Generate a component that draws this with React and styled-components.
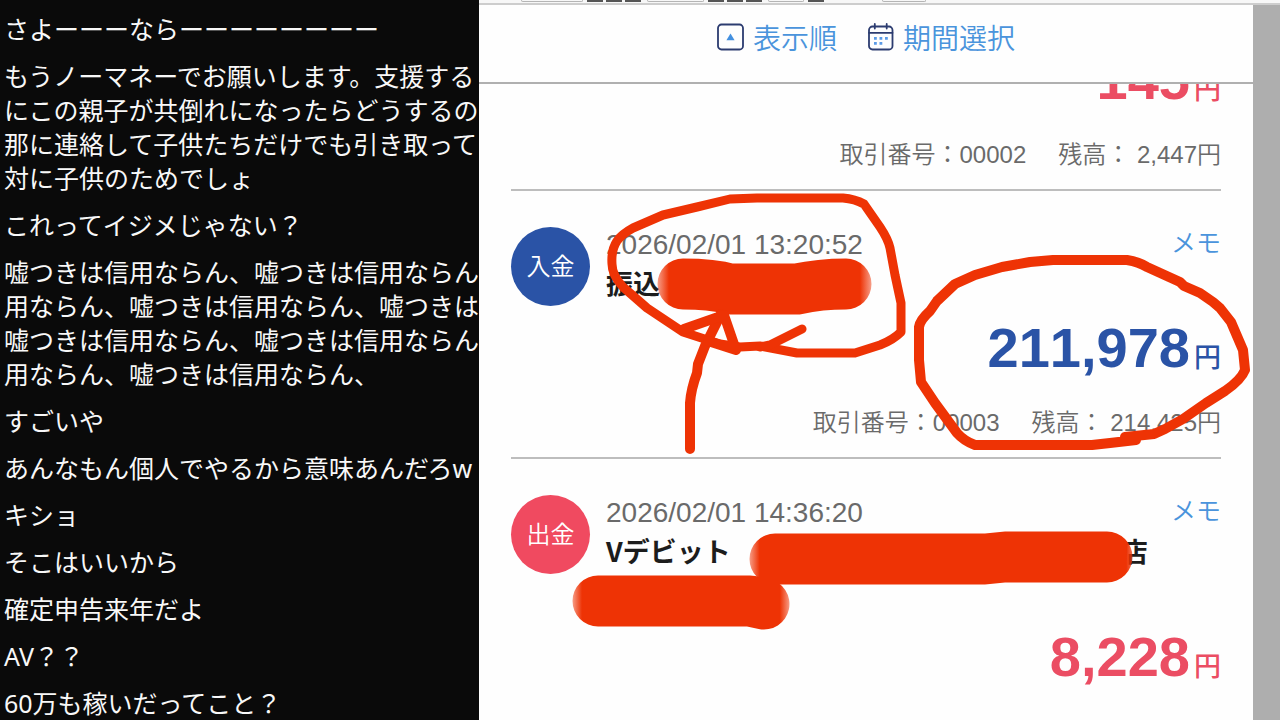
import React from "react";
import styled, { createGlobalStyle } from "styled-components";

const messages = [
  ["さよーーーならーーーーーーーー"],
  [
    "もうノーマネーでお願いします。支援する",
    "にこの親子が共倒れになったらどうするの",
    "那に連絡して子供たちだけでも引き取って",
    "対に子供のためでしょ",
  ],
  ["これってイジメじゃない？"],
  [
    "嘘つきは信用ならん、嘘つきは信用ならん",
    "用ならん、嘘つきは信用ならん、嘘つきは",
    "嘘つきは信用ならん、嘘つきは信用ならん",
    "用ならん、嘘つきは信用ならん、",
  ],
  ["すごいや"],
  ["あんなもん個人でやるから意味あんだろw"],
  ["キショ"],
  ["そこはいいから"],
  ["確定申告来年だよ"],
  ["AV？？"],
  ["60万も稼いだってこと？"],
];

const Amount = ({ value, out }) => (
  <AmountRow $out={out}>
    {value}
    <Yen>円</Yen>
  </AmountRow>
);

const Meta = ({ number, balance }) => (
  <MetaRow>
    <span>取引番号：{number}</span>
    <span>残高： {balance}円</span>
  </MetaRow>
);

const App = () => {
  return (
    <Container>
      <GlobalStyle />
      <Chat>
        {messages.map((lines) => (
          <Message key={lines[0]}>
            {lines.map((line, i) => (
              <Line key={i}>{line}</Line>
            ))}
          </Message>
        ))}
      </Chat>

      <Screen>
        <Strip>
          <Tab $w={62} />
          <Blocks>
            <Block />
            <Block />
            <Block />
          </Blocks>
          <Tab $w={57} />
          <Blocks>
            <Block />
            <Block />
            <Block />
          </Blocks>
          <Tab $w={36} />
          <Block />
          <Tab $w={44} $push />
        </Strip>

        <Body>
          <Page>
            <Toolbar>
              <ToolButton>
                <svg width="27" height="28" viewBox="0 0 27 28" fill="none">
                  <rect x="1" y="1.5" width="25" height="25" rx="3.5" stroke="#2c3c70" strokeWidth="1.8" />
                  <path d="M13.5 10.5 L17.6 17.2 H9.4 Z" fill="#4390e0" />
                </svg>
                表示順
              </ToolButton>
              <ToolButton>
                <svg width="27" height="28" viewBox="0 0 27 28" fill="none">
                  <rect x="2" y="3.5" width="23.5" height="23" rx="3.5" stroke="#2c3c70" strokeWidth="1.8" />
                  <path d="M2 9.8 H25.5 M7.8 0.9 V5.5 M19.7 0.9 V5.5" stroke="#2c3c70" strokeWidth="1.8" strokeLinecap="round" />
                  <path
                    d="M7 14 h2.8 v2.8 h-2.8z M12.5 14 h2.8 v2.8 h-2.8z M18 14 h2.8 v2.8 h-2.8z M7 19 h2.8 v2.8 h-2.8z M12.5 19 h2.8 v2.8 h-2.8z"
                    fill="#5b9be6"
                  />
                </svg>
                期間選択
              </ToolButton>
            </Toolbar>

            <List>
              <Item $scrolled>
                <Amount value="145" out />
                <Meta number="00002" balance="2,447" />
              </Item>

              <Item>
                <Top>
                  <Badge>入金</Badge>
                  <Info>
                    <Time>2026/02/01 13:20:52</Time>
                    <Title>振込</Title>
                  </Info>
                  <Memo href="#">メモ</Memo>
                </Top>
                <Amount value="211,978" />
                <Meta number="00003" balance="214,425" />
              </Item>

              <Item>
                <Top>
                  <Badge $out>出金</Badge>
                  <Info>
                    <Time>2026/02/01 14:36:20</Time>
                    <Title $lines={2}>
                      <span>Vデビット</span>
                      <span>店</span>
                    </Title>
                  </Info>
                  <Memo href="#">メモ</Memo>
                </Top>
                <Amount value="8,228" out />
              </Item>
            </List>
          </Page>
          <Gutter />
        </Body>

        {/* red marker: crossed-out names, circles and the arrow */}
        <Marker viewBox="479 0 801 720" aria-hidden="true">
          <defs>
            <linearGradient id="fade1" gradientUnits="userSpaceOnUse" x1="656" y1="0" x2="873" y2="0">
              <stop offset="0" stopColor="#ee3305" stopOpacity="0.4" />
              <stop offset="0.06" stopColor="#ee3305" />
              <stop offset="0.94" stopColor="#ee3305" />
              <stop offset="1" stopColor="#ee3305" stopOpacity="0.4" />
            </linearGradient>
            <linearGradient id="fade2" gradientUnits="userSpaceOnUse" x1="748" y1="0" x2="1134" y2="0">
              <stop offset="0" stopColor="#ee3305" stopOpacity="0.4" />
              <stop offset="0.03" stopColor="#ee3305" />
              <stop offset="0.98" stopColor="#ee3305" />
              <stop offset="1" stopColor="#ee3305" stopOpacity="0.6" />
            </linearGradient>
            <linearGradient id="fade3" gradientUnits="userSpaceOnUse" x1="571" y1="0" x2="791" y2="0">
              <stop offset="0" stopColor="#ee3305" stopOpacity="0.4" />
              <stop offset="0.05" stopColor="#ee3305" />
              <stop offset="0.95" stopColor="#ee3305" />
              <stop offset="1" stopColor="#ee3305" stopOpacity="0.4" />
            </linearGradient>
          </defs>
          <g strokeWidth="51">
            <path d="M683 284 Q712 284 730 289 L797 289 Q820 284 846 284" stroke="url(#fade1)" />
            <path d="M775 559 L985 559 L1005 557 L1107 557" stroke="url(#fade2)" />
            <path d="M598 601 L750 601 L764 604" stroke="url(#fade3)" />
          </g>
          <g strokeWidth="9" stroke="#ee3305">
            <path d="M683 332 L647 308 L623 287 Q612 275 612 264 Q611 250 617 241 Q622 234 633 228 L663 215 L697 207 L730 199 L757 198 L843 198 Q855 199 864 204 L880 227 Q888 239 890 248 L895 275 L901 303 L901 332 Q893 340 880 345 L855 353 L797 353 L760 346 L740 347 L720 344 Z" />
            <path d="M760 347 L770 345 L802 329" />
          </g>
          <g strokeWidth="10" stroke="#ee3305">
            <path d="M690 449 L690 403 Q691 389 697 373 L698 364 L705 346 L721 314" />
            <path d="M684 329 L724 315 L736 350 L708 341" />
            <path d="M955 284 L975 275 L1002 267 L1030 262 L1053 260 L1127 260 Q1139 262 1147 267 L1180 282 L1184 286 L1200 293 L1213 302 L1220 308 L1231 322 L1243 350 L1245 370 Q1241 380 1225 391 L1206 403 L1183 419 L1165 429 L1154 434 L1125 437 L1136 440 L1110 443 L1092 445 L975 445 Q964 441 957 433 L935 403 L921 382 L919 360 L919 327 Q920 320 930 311 L937 301 Z" />
          </g>
        </Marker>
      </Screen>
    </Container>
  );
};

export default App;

const GlobalStyle = createGlobalStyle`
  * {
    box-sizing: border-box;
  }

  body {
    margin: 0;
    background: #0a0a0a;
  }
`;

const Container = styled.div`
  display: grid;
  grid-template-columns: minmax(0, 479fr) minmax(0, 801fr);
  height: 100vh;
  overflow: hidden;
`;

const Chat = styled.main`
  display: flex;
  flex-direction: column;
  gap: 13px;
  padding: 12px 0 0 4px;
  overflow: hidden;
  background: #0a0a0a;
  color: #f8f8f8;
  font-family: "Noto Sans", "Noto Sans CJK JP", sans-serif;
  font-size: 25px;
  line-height: 34px;
`;

const Message = styled.div`
  flex: none;
`;

const Line = styled.div`
  white-space: nowrap;
`;

const Screen = styled.section`
  position: relative;
  display: flex;
  flex-direction: column;
  overflow: hidden;
  background: #fefefe;
  font-family: "Liberation Sans", "Noto Sans CJK JP", sans-serif;
  font-kerning: none;
`;

/* bottom edge of the bar above the page */
const Strip = styled.div`
  display: flex;
  flex: none;
  gap: 4px;
  height: 5px;
  padding-left: 42px;
  background: #f7f7f7;
  border-bottom: 2px solid #cdcdcd;
`;

const Tab = styled.div`
  width: ${(p) => p.$w}px;
  height: 2px;
  margin-left: ${(p) => (p.$push ? "54px" : "0")};
  border: 1px solid #b5b5b5;
  border-top: none;
  border-radius: 0 0 2px 2px;
`;

const Blocks = styled.div`
  display: flex;
  gap: 3px;
  margin-right: 2px;
`;

const Block = styled.div`
  width: 16px;
  height: 2px;
  background: #555;
`;

const Body = styled.div`
  display: flex;
  flex: 1;
  min-height: 0;
`;

const Page = styled.div`
  flex: 1;
  min-width: 0;
  overflow: hidden;
`;

const Gutter = styled.div`
  width: 27px;
  background: #aeaeae;
`;

const Toolbar = styled.header`
  position: relative;
  z-index: 1;
  display: flex;
  justify-content: center;
  gap: 30px;
  height: 79px;
  padding-top: 8px;
  background: #fefefe;
  border-bottom: 2px solid #b0b0b0;
`;

const ToolButton = styled.button`
  display: flex;
  align-items: center;
  gap: 9px;
  height: 48px;
  padding: 0;
  border: none;
  background: none;
  color: #4a94dc;
  font-family: inherit;
  font-size: 28px;
  font-weight: 350;
  cursor: pointer;
`;

const List = styled.div`
  padding: 0 32px;
`;

const Item = styled.article`
  margin-top: ${(p) => (p.$scrolled ? "-46px" : "0")};
  padding: ${(p) => (p.$scrolled ? "0" : "36px")} 0 16px;
  border-bottom: 2px solid #bdbdbd;

  &:last-child {
    border-bottom: none;
  }
`;

const Top = styled.div`
  display: flex;
  align-items: flex-start;
  gap: 16px;
`;

const Badge = styled.div`
  display: flex;
  flex: none;
  align-items: center;
  justify-content: center;
  width: 79px;
  height: 79px;
  padding-bottom: 4px;
  border-radius: 50%;
  background: ${(p) => (p.$out ? "#f04a60" : "#2a53a6")};
  color: #fff;
  font-size: 24px;
  font-weight: 350;
`;

const Info = styled.div`
  flex: 1;
  min-width: 0;
`;

const Time = styled.div`
  color: #6a6a6a;
  font-size: 28px;
  line-height: 36px;
  white-space: nowrap;
`;

const Title = styled.div`
  display: flex;
  gap: 390px;
  min-height: ${(p) => (p.$lines || 1) * 42}px;
  color: #1c1c1c;
  font-family: "Noto Sans CJK JP", sans-serif;
  font-size: 27px;
  font-weight: 700;
  line-height: 40px;
  white-space: nowrap;
`;

const Memo = styled.a`
  color: #4a94dc;
  font-size: 25px;
  font-weight: 350;
  line-height: 32px;
  text-decoration: none;
`;

const AmountRow = styled.div`
  margin-top: 10px;
  color: ${(p) => (p.$out ? "#eb4d63" : "#2a53a6")};
  font-size: 56px;
  font-weight: 700;
  line-height: 64px;
  text-align: right;
`;

const Yen = styled.span`
  margin-left: 4px;
  font-size: 27px;
  font-weight: 500;
  line-height: 32px;
`;

const MetaRow = styled.div`
  display: flex;
  justify-content: flex-end;
  gap: 32px;
  margin-top: 25px;
  color: #6a6a6a;
  font-size: 24px;
  font-weight: 350;
  line-height: 36px;
  white-space: nowrap;
`;

const Marker = styled.svg`
  position: absolute;
  top: 0;
  left: 0;
  width: 100%;
  fill: none;
  stroke-linecap: round;
  stroke-linejoin: round;
  pointer-events: none;
`;
